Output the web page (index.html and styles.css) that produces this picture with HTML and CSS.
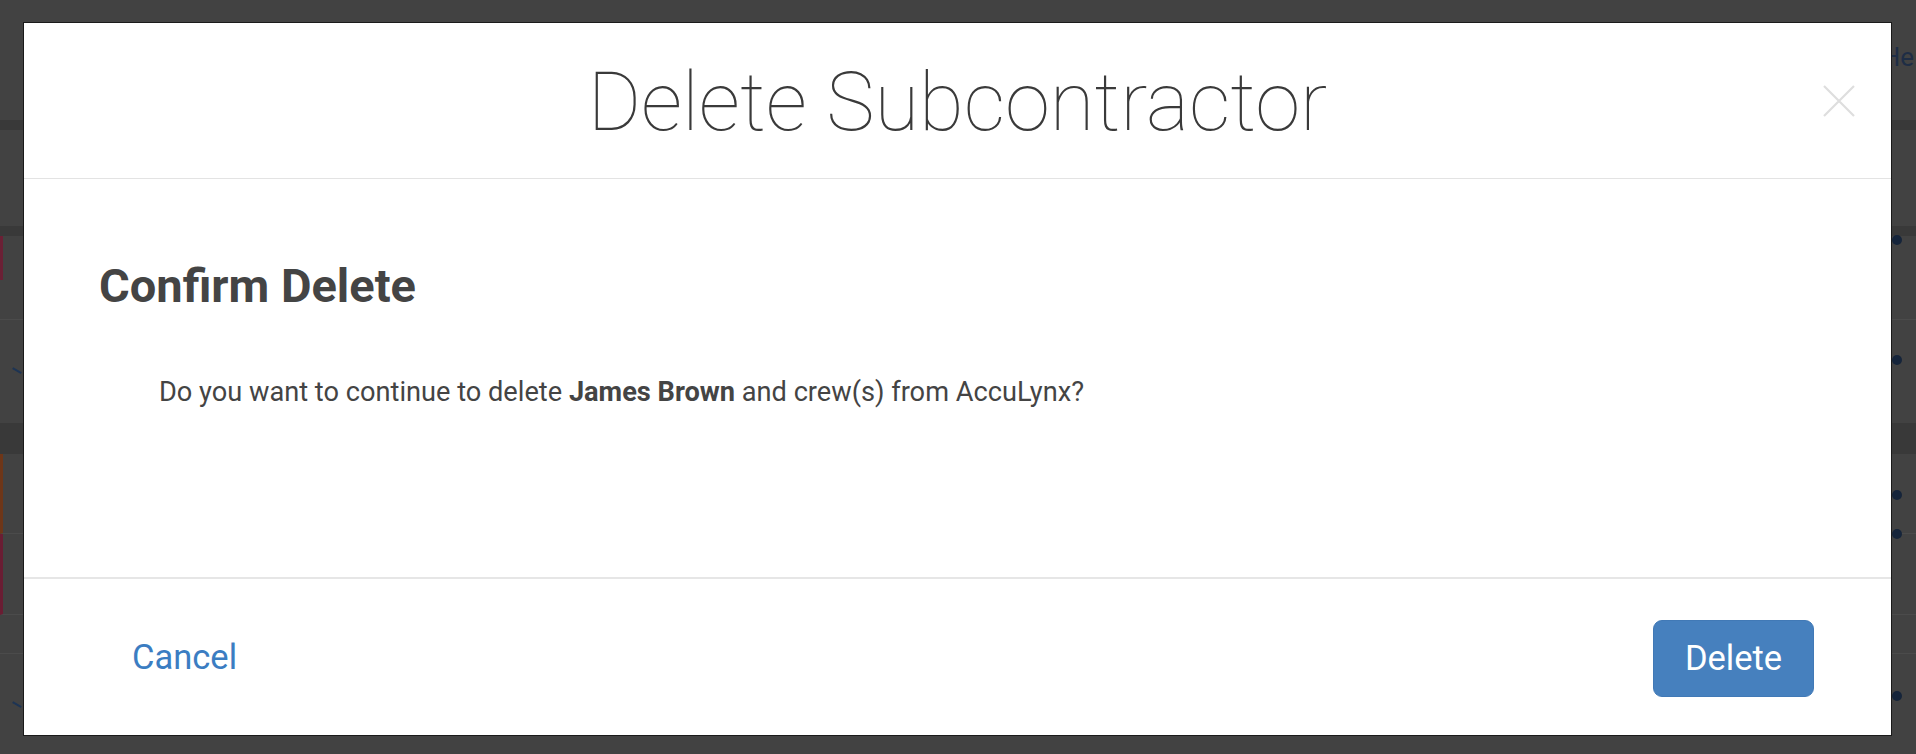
FILE: index.html
```html
<!DOCTYPE html>
<html lang="en">
<head>
<meta charset="utf-8">
<title>Delete Subcontractor</title>
<link rel="stylesheet" href="styles.css">
</head>
<body>
<div class="page">
  <div class="bg-top">
    <span class="bg-link">He</span>
  </div>
  <div class="bg-band"></div>
  <div class="bg-row h96"></div>
  <div class="bg-band"></div>
  <div class="bg-row h44 stripe-red"><span class="dot"></span></div>
  <div class="bg-row h40 line-b"></div>
  <div class="bg-row h103"><span class="check"></span><span class="dot dot-mid"></span></div>
  <div class="bg-band tall"></div>
  <div class="bg-row h80 stripe-orange line-b"><span class="dot dot-low"></span></div>
  <div class="bg-row h79 stripe-crimson line-b"><span class="dot dot-top"></span></div>
  <div class="bg-row h39 line-b"></div>
  <div class="bg-row h100"><span class="check"></span><span class="dot dot-mid2"></span></div>
</div>

<div class="modal" role="dialog" aria-labelledby="modal-title">
  <header class="modal-header">
    <h1 class="modal-title" id="modal-title">Delete Subcontractor</h1>
    <button class="modal-close" aria-label="Close">
      <svg viewBox="0 0 32 32" width="32" height="32" aria-hidden="true">
        <path d="M1 1 L31 31 M31 1 L1 31" stroke="#dedede" stroke-width="2.2" fill="none"/>
      </svg>
    </button>
  </header>
  <section class="modal-body">
    <h2 class="confirm-title">Confirm Delete</h2>
    <p class="confirm-text">Do you want to continue to delete <strong>James Brown</strong> and crew(s) from AccuLynx?</p>
  </section>
  <footer class="modal-footer">
    <button class="btn-cancel">Cancel</button>
    <button class="btn-delete">Delete</button>
  </footer>
</div>
</body>
</html>
```
FILE: styles.css
```css
html, body {
  margin: 0;
  padding: 0;
}
body {
  background: #404040;
  font-family: Roboto, "Liberation Sans", Arial, sans-serif;
  width: 1916px;
  height: 754px;
  overflow: hidden;
  position: relative;
}

/* dimmed page behind the modal */
.page {
  display: flex;
  flex-direction: column;
}
.bg-top {
  height: 120px;
  background: #424242;
  display: flex;
  justify-content: flex-end;
}
.bg-link {
  margin-top: 42px;
  margin-right: 2px;
  font-size: 26px;
  color: #1e2d45;
}
.bg-band {
  height: 10px;
  background: #393939;
}
.bg-band.tall {
  height: 31px;
}
.bg-row {
  background: #424242;
  display: flex;
  justify-content: space-between;
  align-items: flex-start;
  box-sizing: border-box;
  position: relative;
}
.h44 { height: 44px; }
.h40 { height: 40px; }
.h103 { height: 103px; }
.h80 { height: 80px; }
.h79 { height: 81px; }
.h39 { height: 39px; }
.h96 { height: 96px; }
.h100 { height: 100px; }
.line-b {
  border-bottom: 1px solid #4b4b4b;
}
.stripe-red { border-left: 3px solid #6b2035; }
.stripe-orange { border-left: 3px solid #6e3618; }
.stripe-crimson { border-left: 3px solid #6a1d33; }

.dot {
  width: 10px;
  height: 10px;
  border-radius: 50%;
  background: #15243a;
  margin: -1px 14px 0 auto;
}
.dot-mid { margin-top: 35px; }
.dot-low { margin-top: 36px; }
.dot-top { margin-top: -5px; }
.dot-mid2 { margin-top: 37px; }
.check {
  width: 10px;
  height: 4px;
  border-bottom: 2px solid #1d3454;
  transform: rotate(30deg);
  margin: 46px 0 0 13px;
}

/* modal */
.modal {
  position: absolute;
  left: 23px;
  top: 22px;
  width: 1869px;
  height: 714px;
  box-sizing: border-box;
  background: #fff;
  border: 1px solid #1a1a1a;
  display: flex;
  flex-direction: column;
}
.modal-header {
  height: 155px;
  flex: none;
  border-bottom: 1px solid #e3e3e3;
  display: flex;
  align-items: center;
  justify-content: center;
  position: relative;
}
.modal-title {
  margin: 0;
  font-weight: 100;
  font-size: 81.5px;
  line-height: 96px;
  color: #3a3a3a;
  margin-top: 2px;
}
.modal-close {
  position: absolute;
  right: 36px;
  top: 62px;
  width: 32px;
  height: 32px;
  padding: 0;
  border: 0;
  background: none;
  cursor: pointer;
  display: block;
}
.modal-close svg { display: block; }

.modal-body {
  flex: 1;
  padding: 78px 75px 0 75px;
  border-bottom: 2px solid #e6e6e6;
}
.confirm-title {
  margin: 0;
  font-size: 47px;
  font-weight: 700;
  line-height: 57px;
  color: #444;
}
.confirm-text {
  margin: 60px 0 0 60px;
  font-size: 27.2px;
  line-height: 36px;
  color: #444;
}
.confirm-text strong {
  font-weight: 700;
}

.modal-footer {
  height: 156px;
  flex: none;
  display: flex;
  align-items: center;
  justify-content: space-between;
  padding: 0 77px 0 78px;
}
.btn-cancel {
  font-family: inherit;
  font-size: 34.5px;
  color: #3b7dc2;
  background: none;
  border: 0;
  padding: 0 30px;
  line-height: 40px;
  cursor: pointer;
}
.btn-delete {
  font-family: inherit;
  font-size: 34.5px;
  color: #fff;
  background: #4680be;
  border: 1px solid #4179b6;
  border-radius: 9px;
  width: 161px;
  height: 77px;
  padding: 0;
  cursor: pointer;
  margin-top: 2px;
}
```
